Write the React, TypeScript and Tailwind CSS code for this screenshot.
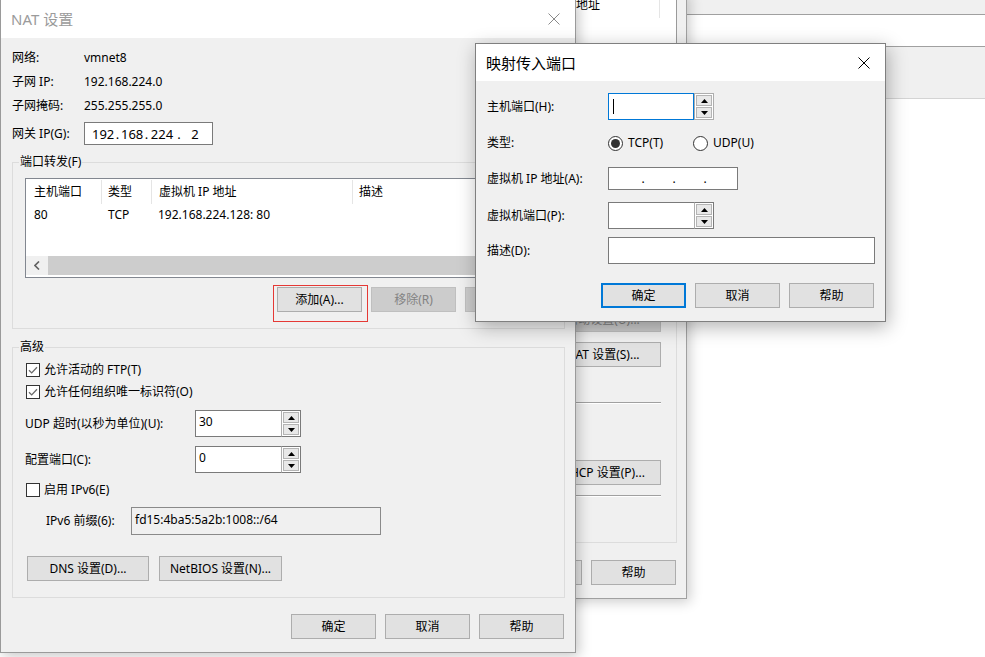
import React from "react";

function Tri({ up }: { up?: boolean }) {
  return (
    <svg width="7" height="4" viewBox="0 0 7 4">
      <path d={up ? "M0 4 L3.5 0 L7 4 Z" : "M0 0 L7 0 L3.5 4 Z"} fill="#000" />
    </svg>
  );
}

function XIcon({ color }: { color: string }) {
  return (
    <svg width="12" height="12" viewBox="0 0 12 12">
      <path d="M0.5 0.5 L11.5 11.5 M11.5 0.5 L0.5 11.5" stroke={color} strokeWidth="1" fill="none" />
    </svg>
  );
}

function Btn({
  children,
  className = "",
  disabled = false,
  focus = false,
}: {
  children?: React.ReactNode;
  className?: string;
  disabled?: boolean;
  focus?: boolean;
}) {
  const look = disabled
    ? "bg-[#cccccc] border border-[#bfbfbf] text-[#838383]"
    : focus
    ? "bg-[#e1e1e1] border-2 border-[#0078d7] text-black"
    : "bg-[#e1e1e1] border border-[#adadad] text-black";
  return (
    <div className={`h-[25px] shrink-0 flex items-center justify-center whitespace-nowrap text-[12px] leading-[14px] ${look} ${className}`}>
      {children}
    </div>
  );
}

function Check({ checked }: { checked?: boolean }) {
  return (
    <div className="w-[14px] h-[14px] shrink-0 border border-[#333333] bg-white flex items-center justify-center">
      {checked && (
        <svg width="12" height="12" viewBox="0 0 12 12">
          <path d="M2 6.2 L4.7 8.9 L10 3.2" fill="none" stroke="#6a6a6a" strokeWidth="1.3" />
        </svg>
      )}
    </div>
  );
}

function Radio({ on }: { on?: boolean }) {
  return (
    <div className="w-[15px] h-[15px] shrink-0 rounded-full border border-[#333333] bg-white flex items-center justify-center">
      {on && <div className="w-[9px] h-[9px] rounded-full bg-[#333333]" />}
    </div>
  );
}

function Spin({ value, focused }: { value?: string; focused?: boolean }) {
  return (
    <div className="flex h-[27px] w-[106px] shrink-0">
      <div
        className={`flex-1 flex items-center bg-white pl-[3px] border ${
          focused ? "border-[#0078d7]" : "border-[#7a7a7a] border-r-0"
        }`}
      >
        {focused ? <div className="ml-[1px] w-px h-[15px] bg-black" /> : <span className="-mt-[3px]">{value}</span>}
      </div>
      <div
        className={`w-[20px] flex flex-col gap-px p-px bg-white border ${
          focused ? "border-[#adadad]" : "border-[#7a7a7a] border-l-[#adadad]"
        }`}
      >
        <div className="flex-1 flex items-center justify-center bg-[#e8e8e8] border border-[#b4b4b4]">
          <Tri up />
        </div>
        <div className="flex-1 flex items-center justify-center bg-[#e8e8e8] border border-[#b4b4b4]">
          <Tri />
        </div>
      </div>
    </div>
  );
}

function NatDialog() {
  return (
    <div className="absolute left-0 top-0 w-[576px] h-[653px] bg-[#f0f0f0] border border-t-0 border-[#9a9a9a] shadow-[3px_3px_12px_rgba(0,0,0,0.22)] flex flex-col">
      <div className="h-[38px] shrink-0 bg-white flex items-center justify-between pl-[10px] pr-[15px]">
        <span className="text-[15px] leading-[20px] text-[#9b9b9b]">NAT 设置</span>
        <XIcon color="#8a8a8a" />
      </div>
      <div className="flex flex-col pl-[11px] pr-[10px] pt-[8px]">
        <div className="flex h-[24px] items-center">
          <div className="w-[72px]">网络:</div>
          <div>vmnet8</div>
        </div>
        <div className="flex h-[24px] items-center">
          <div className="w-[72px]">子网 IP:</div>
          <div>192.168.224.0</div>
        </div>
        <div className="flex h-[24px] items-center">
          <div className="w-[72px]">子网掩码:</div>
          <div>255.255.255.0</div>
        </div>
        <div className="flex items-center mt-[4px] h-[23px]">
          <div className="w-[72px]">网关 IP(G):</div>
          <div className="w-[129px] h-[23px] border border-[#7a7a7a] bg-white flex items-center pl-[7px] text-[13px]">
            <span className="w-[22px] text-center">192</span>
            <span className="w-[7px] text-center">.</span>
            <span className="w-[22px] text-center">168</span>
            <span className="w-[7px] text-center">.</span>
            <span className="w-[24px] text-center">224</span>
            <span className="w-[10px] text-center">.</span>
            <span className="w-[22px] text-center">2</span>
          </div>
        </div>

        {/* 端口转发 */}
        <div className="mt-[17px] border border-[#dcdcdc] flex flex-col pb-[16px]">
          <div className="-mt-[8px] ml-[6px] px-[1px] bg-[#f0f0f0] w-fit leading-[14px]">端口转发(F)</div>
          <div className="mt-[9px] mx-[12px] h-[100px] border border-[#828790] bg-white flex flex-col">
            <div className="flex h-[26px] shrink-0">
              <div className="w-[76px] flex items-center pl-[8px] border-r border-[#e5e5e5] my-[1px]">主机端口</div>
              <div className="w-[50px] flex items-center pl-[6px] border-r border-[#e5e5e5] my-[1px]">类型</div>
              <div className="w-[201px] flex items-center pl-[7px] border-r border-[#e5e5e5] my-[1px]">虚拟机 IP 地址</div>
              <div className="flex-1 flex items-center pl-[6px]">描述</div>
            </div>
            <div className="flex h-[20px] shrink-0 items-center">
              <div className="w-[76px] pl-[8px]">80</div>
              <div className="w-[50px] pl-[6px]">TCP</div>
              <div className="pl-[6px]">192.168.224.128: 80</div>
            </div>
            <div className="flex-1" />
            <div className="h-[19px] mb-[2px] flex shrink-0">
              <div className="w-[22px] bg-[#f0f0f0] flex items-center justify-center">
                <svg width="6" height="9" viewBox="0 0 6 9">
                  <path d="M5 0.5 L1 4.5 L5 8.5" fill="none" stroke="#606060" strokeWidth="1.6" />
                </svg>
              </div>
              <div className="flex-1 bg-[#cdcdcd]" />
            </div>
          </div>
          <div className="mt-[9px] flex gap-[9px] ml-[264px]">
            <div className="relative">
              <Btn className="w-[85px]">添加(A)...</Btn>
              <svg className="absolute z-10 left-[-4px] top-[-2px]" width="95" height="37" viewBox="0 0 95 37">
                <rect x="0.5" y="0.5" width="94" height="36" fill="none" stroke="#e53935" strokeWidth="1" />
              </svg>
            </div>
            <Btn className="w-[85px]" disabled>
              移除(R)
            </Btn>
            <Btn className="w-[85px]" disabled>
              属性(P)...
            </Btn>
          </div>
        </div>

        {/* 高级 */}
        <div className="mt-[18px] border border-[#dcdcdc] flex flex-col pb-[16px]">
          <div className="-mt-[8px] ml-[6px] px-[1px] bg-[#f0f0f0] w-fit leading-[14px]">高级</div>
          <div className="mt-[8px] ml-[13px] h-[16px] flex items-center gap-[4px]">
            <Check checked />
            <span>允许活动的 FTP(T)</span>
          </div>
          <div className="mt-[6px] ml-[13px] h-[16px] flex items-center gap-[4px]">
            <Check checked />
            <span>允许任何组织唯一标识符(O)</span>
          </div>
          <div className="mt-[10px] ml-[12px] h-[27px] flex items-center">
            <div className="w-[170px]">UDP 超时(以秒为单位)(U):</div>
            <Spin value="30" />
          </div>
          <div className="mt-[9px] ml-[12px] h-[27px] flex items-center">
            <div className="w-[170px]">配置端口(C):</div>
            <Spin value="0" />
          </div>
          <div className="mt-[9px] ml-[13px] h-[16px] flex items-center gap-[4px]">
            <Check />
            <span>启用 IPv6(E)</span>
          </div>
          <div className="mt-[9px] ml-[33px] h-[28px] flex items-center">
            <div className="w-[85px]">IPv6 前缀(6):</div>
            <div className="w-[250px] h-[28px] border border-[#8a8a8a] bg-[#f0f0f0] flex items-start pt-[4px] pl-[3px]">
              fd15:4ba5:5a2b:1008::/64
            </div>
          </div>
          <div className="mt-[21px] ml-[14px] flex gap-[10px]">
            <Btn className="w-[122px]">DNS 设置(D)...</Btn>
            <Btn className="w-[123px]">NetBIOS 设置(N)...</Btn>
          </div>
        </div>

        <div className="mt-[16px] mr-[1px] flex justify-end gap-[9px]">
          <Btn className="w-[85px]">确定</Btn>
          <Btn className="w-[85px]">取消</Btn>
          <Btn className="w-[85px]">帮助</Btn>
        </div>
      </div>
    </div>
  );
}

function MapDialog() {
  return (
    <div className="absolute left-[475px] top-[43px] w-[411px] h-[279px] bg-[#f0f0f0] border border-[#7f7f7f] shadow-[2px_5px_18px_rgba(0,0,0,0.3)] flex flex-col">
      <div className="h-[37px] shrink-0 bg-white flex items-center justify-between pl-[10px] pr-[15px]">
        <span className="text-[15px] leading-[20px] text-black">映射传入端口</span>
        <XIcon color="#000" />
      </div>
      <div className="flex flex-col pl-[11px]">
        <div className="mt-[12px] h-[27px] flex items-center">
          <div className="w-[121px]">主机端口(H):</div>
          <Spin focused />
        </div>
        <div className="mt-[15px] h-[16px] flex items-center">
          <div className="w-[121px]">类型:</div>
          <div className="w-[85px] flex items-center gap-[5px]">
            <Radio on />
            <span>TCP(T)</span>
          </div>
          <div className="flex items-center gap-[5px]">
            <Radio />
            <span>UDP(U)</span>
          </div>
        </div>
        <div className="mt-[16px] h-[23px] flex items-center">
          <div className="w-[121px]">虚拟机 IP 地址(A):</div>
          <div className="w-[130px] h-[23px] border border-[#7a7a7a] bg-white flex items-center">
            <span className="w-[31px]" />
            <span className="w-[6px] text-center">.</span>
            <span className="w-[25px]" />
            <span className="w-[6px] text-center">.</span>
            <span className="w-[25px]" />
            <span className="w-[6px] text-center">.</span>
          </div>
        </div>
        <div className="mt-[12px] h-[27px] flex items-center">
          <div className="w-[121px]">虚拟机端口(P):</div>
          <Spin value="" />
        </div>
        <div className="mt-[8px] h-[27px] flex items-center">
          <div className="w-[121px]">描述(D):</div>
          <div className="w-[267px] h-[27px] border border-[#7a7a7a] bg-white" />
        </div>
        <div className="mt-[19px] ml-[114px] flex gap-[9px]">
          <Btn className="w-[85px]" focus>
            确定
          </Btn>
          <Btn className="w-[85px]">取消</Btn>
          <Btn className="w-[85px]">帮助</Btn>
        </div>
      </div>
    </div>
  );
}

function EditorWindow() {
  return (
    <div className="absolute left-[400px] top-[-8px] w-[287px] h-[607px] bg-[#f0f0f0] border-r border-b border-[#a0a0a0] shadow-[3px_3px_12px_rgba(0,0,0,0.2)] flex flex-col">
      <div className="h-[308px] shrink-0 mr-[9px] bg-white border-r border-[#9a9a9a] flex flex-col">
        <div className="flex h-[26px]">
          <div className="w-[260px] h-full flex items-center pl-[176px] border-r border-[#e5e5e5]">地址</div>
        </div>
      </div>
      <div className="mt-[5px] mr-[9px] h-[238px] shrink-0 border border-[#dcdcdc] flex flex-col items-end pr-[15px]">
        <Btn className="w-[106px] mt-[1px] pr-[10px]" disabled>
          自动设置(U)...
        </Btn>
        <Btn className="w-[106px] mt-[10px] pr-[10px]">NAT 设置(S)...</Btn>
        <div className="mt-[35px] w-[130px] border-t border-[#a0a0a0] border-b border-b-white h-[2px]" />
        <Btn className="w-[106px] mt-[56px] pr-[10px]">DHCP 设置(P)...</Btn>
        <div className="mt-[10px] w-[130px] border-t border-[#a0a0a0] border-b border-b-white h-[2px]" />
      </div>
      <div className="mt-[17px] flex justify-end gap-[9px] pr-[10px]">
        <Btn className="w-[85px]">取消</Btn>
        <Btn className="w-[85px]">帮助</Btn>
      </div>
    </div>
  );
}

function BackWindow() {
  return (
    <div className="absolute left-[686px] top-0 w-[299px] flex flex-col">
      <div className="h-[15px] bg-[#f0f0f0] border-b border-[#a0a0a0]" />
      <div className="h-[32px] bg-white border-b border-[#a0a0a0]" />
      <div className="h-[52px] bg-[#f0f0f0] border-b border-[#d4d4d4]" />
    </div>
  );
}

export default function App() {
  return (
    <div className="relative w-[985px] h-[657px] overflow-hidden bg-white text-black text-[12px] leading-[16px] font-[family-name:'Noto_Sans','Noto_Sans_CJK_SC',sans-serif]">
      <BackWindow />
      <EditorWindow />
      <NatDialog />
      <MapDialog />
    </div>
  );
}
